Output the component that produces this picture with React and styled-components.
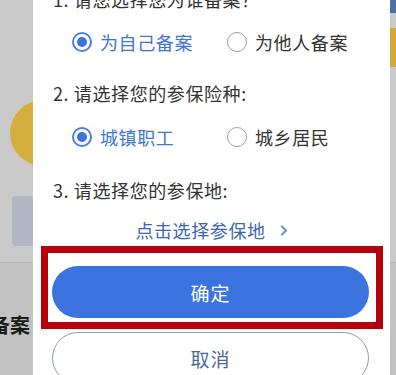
import React, { useState } from 'react';
import styled, { createGlobalStyle } from 'styled-components';

const GlobalStyle = createGlobalStyle`
  html, body {
    margin: 0;
    padding: 0;
    background: #c6c6c6;
    font-family: "Noto Sans CJK SC", "Noto Sans", sans-serif;
  }
`;

const Screen = styled.div`
  position: relative;
  width: 396px;
  height: 375px;
  overflow: hidden;
  background: #c9c9c9;
`;

/* dimmed page behind the dialog */
const TopBar = styled.div`
  height: 13px;
  display: flex;
  justify-content: flex-end;
`;

const BlueTab = styled.div`
  width: 60px;
  background: #4e6ea4;
`;

const YellowRow = styled.div`
  margin-top: 15px;
  height: 39px;
  display: flex;
  justify-content: flex-end;
`;

const YellowTab = styled.div`
  width: 40px;
  background: #cfa93c;
  border-radius: 8px 0 0 8px;
`;

const YellowBadge = styled.div`
  margin: 33px 0 0 10px;
  width: 66px;
  height: 66px;
  border-radius: 50%;
  background: #d4ae3e;
`;

const GreyTile = styled.div`
  margin: 30px 0 0 12px;
  width: 22px;
  height: 50px;
  border-radius: 4px;
  background: #b3b7c5;
`;

const Divider = styled.div`
  margin-top: 16px;
  height: 1px;
  background: #b2b2b2;
`;

const LowerArea = styled.div`
  background: #c2c2c2;
  height: 120px;
  padding-top: 50px;
  box-sizing: border-box;
  overflow: hidden;
`;

const BgTitle = styled.div`
  margin-left: -30px;
  font-size: 20px;
  font-weight: 700;
  line-height: 24px;
  color: #1a1a1a;
  white-space: nowrap;
`;

/* dialog */
const Dialog = styled.div`
  position: absolute;
  left: 33px;
  top: -13px;
  width: 357px;
  bottom: -40px;
  background: #fff;
`;

const Question = styled.div`
  margin-top: ${(p) => p.$gap || 0}px;
  padding-left: 20px;
  font-size: 18px;
  line-height: 24px;
  letter-spacing: 0.6px;
  color: #333;
`;

const RadioRow = styled.div`
  margin-top: ${(p) => p.$gap}px;
  padding-left: 39px;
  display: flex;
`;

const Option = styled.label`
  width: 155px;
  display: flex;
  align-items: center;
  gap: 8px;
  font-size: 18px;
  line-height: 24px;
  letter-spacing: 0.6px;
  color: ${(p) => (p.$checked ? '#3e75d6' : '#333')};
  cursor: pointer;
`;

const Circle = styled.span`
  width: 20px;
  height: 20px;
  box-sizing: border-box;
  border-radius: 50%;
  border: ${(p) => (p.$checked ? '2px solid #4a80de' : '1.7px solid #9d9d9d')};
  display: flex;
  align-items: center;
  justify-content: center;

  &::after {
    content: '';
    display: ${(p) => (p.$checked ? 'block' : 'none')};
    width: 10px;
    height: 10px;
    border-radius: 50%;
    background: #3a73dc;
  }
`;

const PlaceLink = styled.div`
  margin-top: 16px;
  display: flex;
  justify-content: center;
  align-items: center;
  gap: 14px;
  font-size: 18px;
  line-height: 24px;
  letter-spacing: 0.6px;
  color: #3b66b4;
`;

const Actions = styled.div`
  margin-top: 24px;
  padding: 0 21px 0 19px;
  display: flex;
  flex-direction: column;
  gap: 14px;
`;

const Highlight = styled.div`
  position: relative;
`;

const RedFrame = styled.div`
  position: absolute;
  top: -20px;
  bottom: -11px;
  left: -11px;
  right: -14px;
  border: 7.5px solid #b6000a;
  pointer-events: none;
`;

const Button = styled.button`
  width: 100%;
  height: 52px;
  border-radius: 26px;
  font-family: inherit;
  font-size: 19px;
  letter-spacing: 1px;
  cursor: pointer;
  border: ${(p) => (p.$primary ? 'none' : '1px solid #8d9bb6')};
  background: ${(p) => (p.$primary ? '#3b73df' : '#fff')};
  color: ${(p) => (p.$primary ? '#fff' : '#4a6797')};
`;

const Chevron = () => (
  <svg width="8" height="11" viewBox="0 0 8 11">
    <path d="M2 1.5 L6 5.5 L2 9.5" fill="none" stroke="#6f95d8" strokeWidth="2.2" strokeLinecap="round" strokeLinejoin="round" />
  </svg>
);

const Radio = ({ checked, label, onClick }) => (
  <Option $checked={checked} onClick={onClick}>
    <Circle $checked={checked} />
    {label}
  </Option>
);

export default function App() {
  const [who, setWho] = useState('self');
  const [kind, setKind] = useState('worker');

  return (
    <>
      <GlobalStyle />
      <Screen>
        <TopBar><BlueTab /></TopBar>
        <YellowRow><YellowTab /></YellowRow>
        <YellowBadge />
        <GreyTile />
        <Divider />
        <LowerArea>
          <BgTitle>去备案</BgTitle>
        </LowerArea>

        <Dialog>
          <Question>1. 请您选择您为谁备案？</Question>
          <RadioRow $gap={19}>
            <Radio checked={who === 'self'} label="为自己备案" onClick={() => setWho('self')} />
            <Radio checked={who === 'other'} label="为他人备案" onClick={() => setWho('other')} />
          </RadioRow>
          <Question $gap={27}>2. 请选择您的参保险种:</Question>
          <RadioRow $gap={20}>
            <Radio checked={kind === 'worker'} label="城镇职工" onClick={() => setKind('worker')} />
            <Radio checked={kind === 'resident'} label="城乡居民" onClick={() => setKind('resident')} />
          </RadioRow>
          <Question $gap={29}>3. 请选择您的参保地:</Question>
          <PlaceLink>
            点击选择参保地
            <Chevron />
          </PlaceLink>
          <Actions>
            <Highlight>
              <RedFrame />
              <Button $primary>确定</Button>
            </Highlight>
            <Button>取消</Button>
          </Actions>
        </Dialog>
      </Screen>
    </>
  );
}
